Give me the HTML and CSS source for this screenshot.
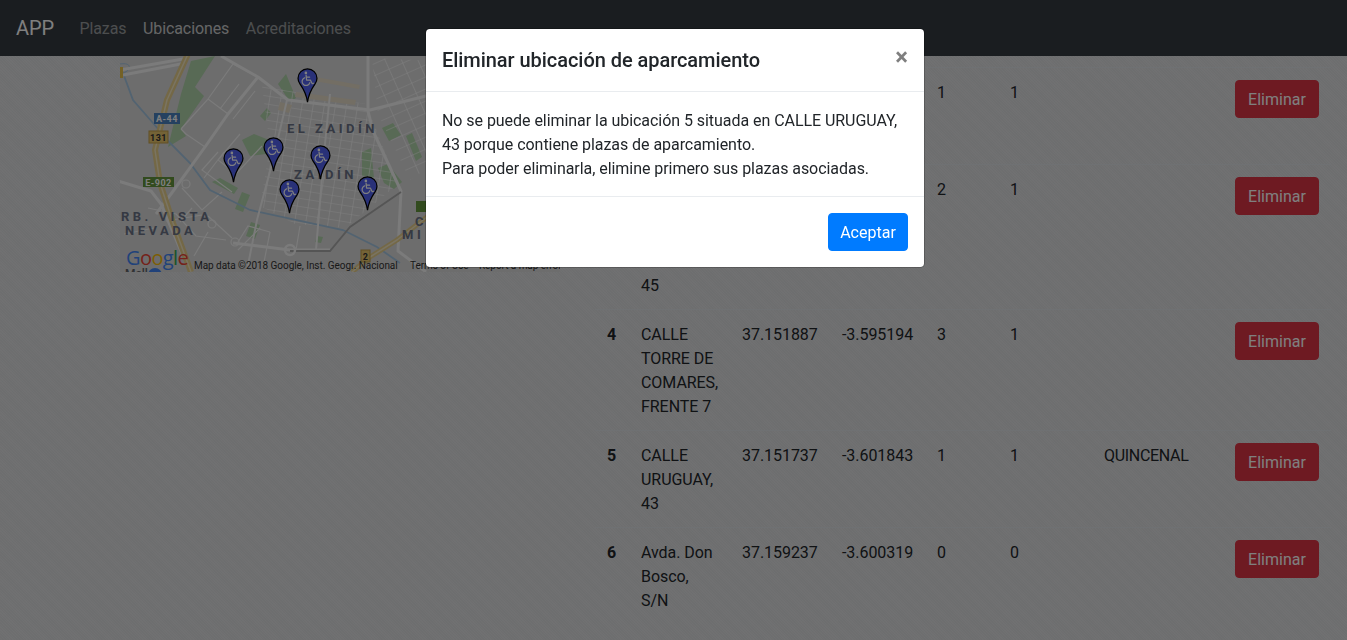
FILE: index.html
```html
<!DOCTYPE html>
<html lang="es">
<head>
    <meta charset="UTF-8">
    <title>APP</title>
    <link rel="stylesheet" href="styles.css">
</head>
<body>
<nav class="navbar">
    <a class="navbar-brand" href="#">APP</a>
    <a class="nav-link" href="#">Plazas</a>
    <a class="nav-link active" href="#">Ubicaciones</a>
    <a class="nav-link" href="#">Acreditaciones</a>
</nav>

<div class="main">
    <div class="map">
        <svg class="map-svg" width="440" height="216" viewBox="0 0 440 216">
            <defs>
                <pattern id="streets" width="11" height="8" patternUnits="userSpaceOnUse" patternTransform="rotate(9)">
                    <path d="M0 0H11M0 0V8" stroke="#fff" stroke-width="1.200" fill="none"/>
                </pattern>
                <pattern id="streets-b" width="15" height="11" patternUnits="userSpaceOnUse" patternTransform="rotate(-24)">
                    <path d="M0 0H15M0 0V11" stroke="#fff" stroke-width="1.200" fill="none"/>
                </pattern>
                <symbol id="pin" viewBox="0 0 22 37" width="21" height="35">
                    <path d="M11 1C5.500 1 1 5.400 1 10.800c0 2.200.7 4.200 2 6 3.400 4.800 6.600 9.600 8 19.200 1.400-9.600 4.600-14.400 8-19.200 1.300-1.800 2-3.800 2-6C21 5.400 16.500 1 11 1z" fill="#5262f0" stroke="#000" stroke-width="1.300"/>
                    <g fill="none" stroke="#fff" stroke-width="1.300" stroke-linecap="round" stroke-linejoin="round">
                        <path d="M9.500 7.500l.5 5.200h4l2 4 1.500-.6"/>
                        <path d="M9.800 9.700h3.400"/>
                        <path d="M7.800 10.400a4.200 4.200 0 1 0 5.700 5"/>
                    </g>
                    <circle cx="9.300" cy="5.200" r="1.400" fill="#fff"/>
                </symbol>
            </defs>

            <rect width="440" height="216" fill="#dadada"/>

            <!-- parques -->
            <g fill="#b0d4aa">
                <path d="M95 0L75 31l9 9-23 33 5 7-18 11 13-53L71 5z"/>
                <path d="M122 84l12-6 20 8-8 12-16 2z"/>
                <path d="M158 28l8-10 10 24-6 4z"/>
                <path d="M140 60l7-8 4 5-6 8z"/>
                <path d="M242 96l9-4 3 30-12-2z"/>
                <path d="M262 72l11-5 8 12-12 6z"/>
                <path d="M122 136l8 3-7 17-8-3z"/>
                <path d="M100 122l18 10-4 6-22-12z"/>
                <path d="M131 166l9 3-5 14-9-3z"/>
                <path d="M197 180l6 1-2 6-6-1z"/>
                <path d="M258 112l10-4 14 18-8 7-10-6z"/>
                <path d="M286 80l6-3 10 24-6 4z"/>
            </g>

            <!-- manzanas de calles -->
            <path d="M142 30L246 48 278 128 225 172 175 168 140 150 150 90z" fill="url(#streets)"/>
            <path d="M252 2L340 6V90L290 124 258 58z" fill="url(#streets-b)"/>
            <g fill="#e6dcc8">
                <path d="M176 36l60 8-1 5-60-8zM190 20l50 9-1 4-50-9zM160 46l12 3-3 8-11-3z"/>
            </g>

            <!-- calles finas -->
            <g fill="none" stroke="#f6f6f6" stroke-width="1.200">
                <path d="M61 73L88 43l20 15M66 78l19 13M61 73l5 5M88 43L113 8l25 13M100 53l19-25M113 63l22-28"/>
                <path d="M120 78l-22 26 18 14 26-28M84 122l20-26M62 132l20 22 20-18M28 152l28 6 20 22 30 4M46 165l36-6M88 160l24 22M98 96l-16 18 30 22"/>
                <path d="M4 178l30-6M72 152l-12 14M88 176l-14 24M140 172l-22 22M150 176l-6 30M180 170l-4 24M118 186l10-16 22 6"/>
                <circle cx="92" cy="168" r="4"/>
                <circle cx="115" cy="186" r="4"/>
                <circle cx="66" cy="128" r="4"/>
            </g>

            <!-- rio y canal -->
            <path d="M3 17L13 44l20 23 17 20 20 20 20 27 40 20 93 20 34 17 23 16" fill="none" stroke="#a4c6e2" stroke-width="1.800"/>
            <path d="M0 8c12-2 12 6 3 9" fill="none" stroke="#a4c6e2" stroke-width="1"/>

            <!-- avenidas -->
            <g fill="none" stroke="#f6f6f6" stroke-width="3" stroke-linejoin="round">
                <path d="M0 14L63 3M3 19L66 7"/>
                <path d="M138 21L108 58 85 91 51 138 36 158"/>
                <path d="M101 0L138 21l30 23 82 10 56-14 134-10"/>
                <path d="M-2 125l33 10 10 13 22 52"/>
                <path d="M248 0v55l5 20 28 60-3 60 28 21"/>
                <path d="M113 187l57 7h40"/>
            </g>
            <g fill="none" stroke="#f6f6f6" stroke-width="2">
                <path d="M167 44l-14 60-16 60-10 50"/>
                <path d="M210 38l-6 60-8 96"/>
            </g>
            <path d="M281 136l-51 35-20 24h-40" fill="none" stroke="#aaa" stroke-width="1.800"/>
            <circle cx="170" cy="194" r="5" fill="none" stroke="#f6f6f6" stroke-width="2.500"/>

            <!-- autovias -->
            <g fill="none" stroke-linejoin="round">
                <path d="M68 -2L47 44 35 94l5 33 13 40 18 49" stroke="#e8d08c" stroke-width="6"/>
                <path d="M68 -2L47 44 35 94l5 33 13 40 18 49" stroke="#f4e8c4" stroke-width="1.500"/>
                <path d="M232 216l18-15 27-17 30-23 40-40" stroke="#e8d08c" stroke-width="5"/>
                <path d="M232 216l18-15 27-17 30-23 40-40" stroke="#f4e8c4" stroke-width="1.500"/>
            </g>

            <!-- carteles -->
            <rect x="0" y="11" width="3" height="11" fill="#e8c24c"/>
            <rect x="34" y="57" width="26" height="11" fill="#4a82c0"/>
            <text class="shield" x="47" y="66">A-44</text>
            <rect x="29" y="75" width="19" height="12" fill="#e8c66c" stroke="#c4a048"/>
            <text class="shield dark" x="38.500" y="85">131</text>
            <rect x="23" y="121" width="31" height="10" fill="#64963c"/>
            <text class="shield" x="38.500" y="130">E-902</text>
            <rect x="241" y="194" width="9" height="12" fill="#e8c66c" stroke="#c4a048"/>
            <text class="shield dark" x="245.500" y="204">2</text>
            <rect x="296" y="145" width="12" height="11" fill="#64963c"/>

            <!-- nombres -->
            <text class="place" x="167" y="77">EL ZAIDÍN</text>
            <text class="place" x="174" y="123">ZAIDÍN</text>
            <text class="place" x="1" y="165">RB. VISTA</text>
            <text class="place" x="5" y="179">NEVADA</text>
            <text class="place" x="295" y="170">C</text>
            <text class="place" x="282" y="183">MI</text>

            <!-- marcadores -->
            <use href="#pin" x="177" y="12"/>
            <use href="#pin" x="103" y="92"/>
            <use href="#pin" x="143" y="81"/>
            <use href="#pin" x="190" y="89"/>
            <use href="#pin" x="159" y="123"/>
            <use href="#pin" x="237" y="120"/>

            <!-- pie del mapa -->
            <text class="google" x="6" y="209"><tspan fill="#4285f4">G</tspan><tspan fill="#ea4335">o</tspan><tspan fill="#fbbc05">o</tspan><tspan fill="#4285f4">g</tspan><tspan fill="#34a853">l</tspan><tspan fill="#ea4335">e</tspan></text>
            <text class="mall" x="5" y="222">Mall</text>
            <circle cx="35" cy="219" r="7" fill="#4285f4"/>
            <text class="terms" x="74" y="213">Map data ©2018 Google, Inst. Geogr. Nacional</text>
            <text class="terms" x="290" y="213">Terms of Use</text>
            <text class="terms" x="359" y="213">Report a map error</text>
        </svg>
    </div>

    <table class="table">
        <colgroup>
            <col class="col-id">
            <col class="col-addr">
            <col class="col-lat">
            <col class="col-lng">
            <col class="col-a">
            <col class="col-b">
            <col class="col-c">
            <col class="col-btn">
        </colgroup>
        <tbody>
            <tr>
                <th>2</th>
                <td>CALLE PALENCIA, 12</td>
                <td>37.158214</td>
                <td>-3.602117</td>
                <td>1</td>
                <td>1</td>
                <td></td>
                <td><button class="btn btn-danger">Eliminar</button></td>
            </tr>
            <tr>
                <th>3</th>
                <td>CALLE PINTOR LOPEZ MARTINEZ 45</td>
                <td>37.153402</td>
                <td>-3.598760</td>
                <td>2</td>
                <td>1</td>
                <td></td>
                <td><button class="btn btn-danger">Eliminar</button></td>
            </tr>
            <tr>
                <th>4</th>
                <td>CALLE TORRE DE COMARES, FRENTE 7</td>
                <td>37.151887</td>
                <td>-3.595194</td>
                <td>3</td>
                <td>1</td>
                <td></td>
                <td><button class="btn btn-danger">Eliminar</button></td>
            </tr>
            <tr>
                <th>5</th>
                <td>CALLE URUGUAY, 43</td>
                <td>37.151737</td>
                <td>-3.601843</td>
                <td>1</td>
                <td>1</td>
                <td class="cell-period">QUINCENAL</td>
                <td><button class="btn btn-danger">Eliminar</button></td>
            </tr>
            <tr>
                <th>6</th>
                <td>Avda. Don Bosco, S/N</td>
                <td>37.159237</td>
                <td>-3.600319</td>
                <td>0</td>
                <td>0</td>
                <td></td>
                <td><button class="btn btn-danger">Eliminar</button></td>
            </tr>
        </tbody>
    </table>
</div>

<div class="modal-backdrop"></div>
<div class="modal">
    <div class="modal-content">
        <div class="modal-header">
            <h5 class="modal-title">Eliminar ubicación de aparcamiento</h5>
            <button class="close">×</button>
        </div>
        <div class="modal-body">
            No se puede eliminar la ubicación 5 situada en CALLE URUGUAY, 43 porque contiene plazas de aparcamiento.<br>
            Para poder eliminarla, elimine primero sus plazas asociadas.
        </div>
        <div class="modal-footer">
            <button class="btn btn-primary">Aceptar</button>
        </div>
    </div>
</div>
</body>
</html>
```

FILE: styles.css
```css
html, body {
    height: 100%;
}
body {
    margin: 0;
    overflow: hidden;
    font-family: Roboto, "Liberation Sans", sans-serif;
    font-size: 16px;
    line-height: 1.5;
    letter-spacing: -0.05px;
    color: #212529;
    background-color: #e0e1e3;
    background-image:
        repeating-linear-gradient(45deg, rgba(0,0,0,0.025) 0 1px, transparent 1px 2px),
        repeating-linear-gradient(-45deg, rgba(255,255,255,0.05) 0 1px, transparent 1px 2px);
}
a {
    text-decoration: none;
}

.navbar {
    display: flex;
    align-items: center;
    height: 56px;
    box-sizing: border-box;
    padding: 8px 16px;
    background-color: #343a40;
}
.navbar-brand {
    font-size: 20px;
    margin-right: 17px;
    color: #fff;
}
.nav-link {
    padding: 9px 8.300px 7px;
    letter-spacing: -0.1px;
    color: rgba(255,255,255,0.5);
}
.nav-link.active {
    color: rgba(255,255,255,0.75);
}

.main {
    display: flex;
    align-items: flex-start;
    padding-left: 120px;
    gap: 35px;
}
.map {
    flex: none;
    width: 440px;
    height: 216px;
    overflow: hidden;
}
.map-svg {
    display: block;
}
.shield {
    font: 700 9px Roboto, sans-serif;
    letter-spacing: 0.5px;
    fill: #fff;
    text-anchor: middle;
}
.shield.dark {
    fill: #333;
}
.place {
    font: 700 13px Roboto, sans-serif;
    letter-spacing: 3.500px;
    fill: #6a7286;
}
.google {
    font: 500 20px "Open Sans", sans-serif;
    letter-spacing: -0.6px;
}
.mall {
    font: 500 12px Roboto, sans-serif;
    fill: #5f6368;
}
.terms {
    font: 10px Roboto, sans-serif;
    letter-spacing: -0.05px;
    fill: #333;
}

.table {
    flex: none;
    width: 736px;
    margin-top: 11px;
    table-layout: fixed;
    border-collapse: collapse;
}
.col-id { width: 34px; }
.col-addr { width: 101px; }
.col-lat { width: 100px; }
.col-lng { width: 95px; }
.col-a { width: 73px; }
.col-b { width: 94px; }
.col-c { width: 131px; }
.col-btn { width: 108px; }
.table th, .table td {
    padding: 13px 12px 11px;
    vertical-align: top;
    text-align: left;
    border-top: 1px solid #dee2e6;
}
.table th {
    font-weight: 700;
}
.table td:last-child {
    padding-top: 12px;
    padding-bottom: 12px;
}
.cell-period {
    letter-spacing: -0.3px;
}

.btn {
    display: inline-block;
    padding: 7px 12px 5px;
    border: 1px solid transparent;
    border-radius: 4px;
    font: inherit;
    color: #fff;
    cursor: pointer;
}
.btn-danger {
    width: 84px;
    background-color: #dc3545;
    border-color: #dc3545;
}
.btn-primary {
    width: 80px;
    padding-left: 0;
    padding-right: 0;
    background-color: #007bff;
    border-color: #007bff;
}

.modal-backdrop {
    position: fixed;
    top: 0;
    left: 0;
    right: 0;
    bottom: 0;
    background-color: rgba(0,0,0,0.5);
}
.modal {
    position: fixed;
    top: 28px;
    left: 425px;
    width: 500px;
}
.modal-content {
    background-color: #fff;
    background-clip: padding-box;
    border: 1px solid rgba(0,0,0,0.2);
    border-radius: 4.8px;
}
.modal-header {
    display: flex;
    justify-content: space-between;
    align-items: flex-start;
    padding: 16px;
    border-bottom: 1px solid #e9ecef;
}
.modal-title {
    margin: 0;
    font-size: 20px;
    font-weight: 500;
    line-height: 1.5;
}
.close {
    padding: 0;
    border: none;
    background: none;
    font: 700 24px/1 Roboto, sans-serif;
    color: #000;
    opacity: 0.5;
    cursor: pointer;
}
.modal-body {
    padding: 17px 16px 15px;
}
.modal-footer {
    display: flex;
    justify-content: flex-end;
    padding: 16px;
    border-top: 1px solid #e9ecef;
}
```
